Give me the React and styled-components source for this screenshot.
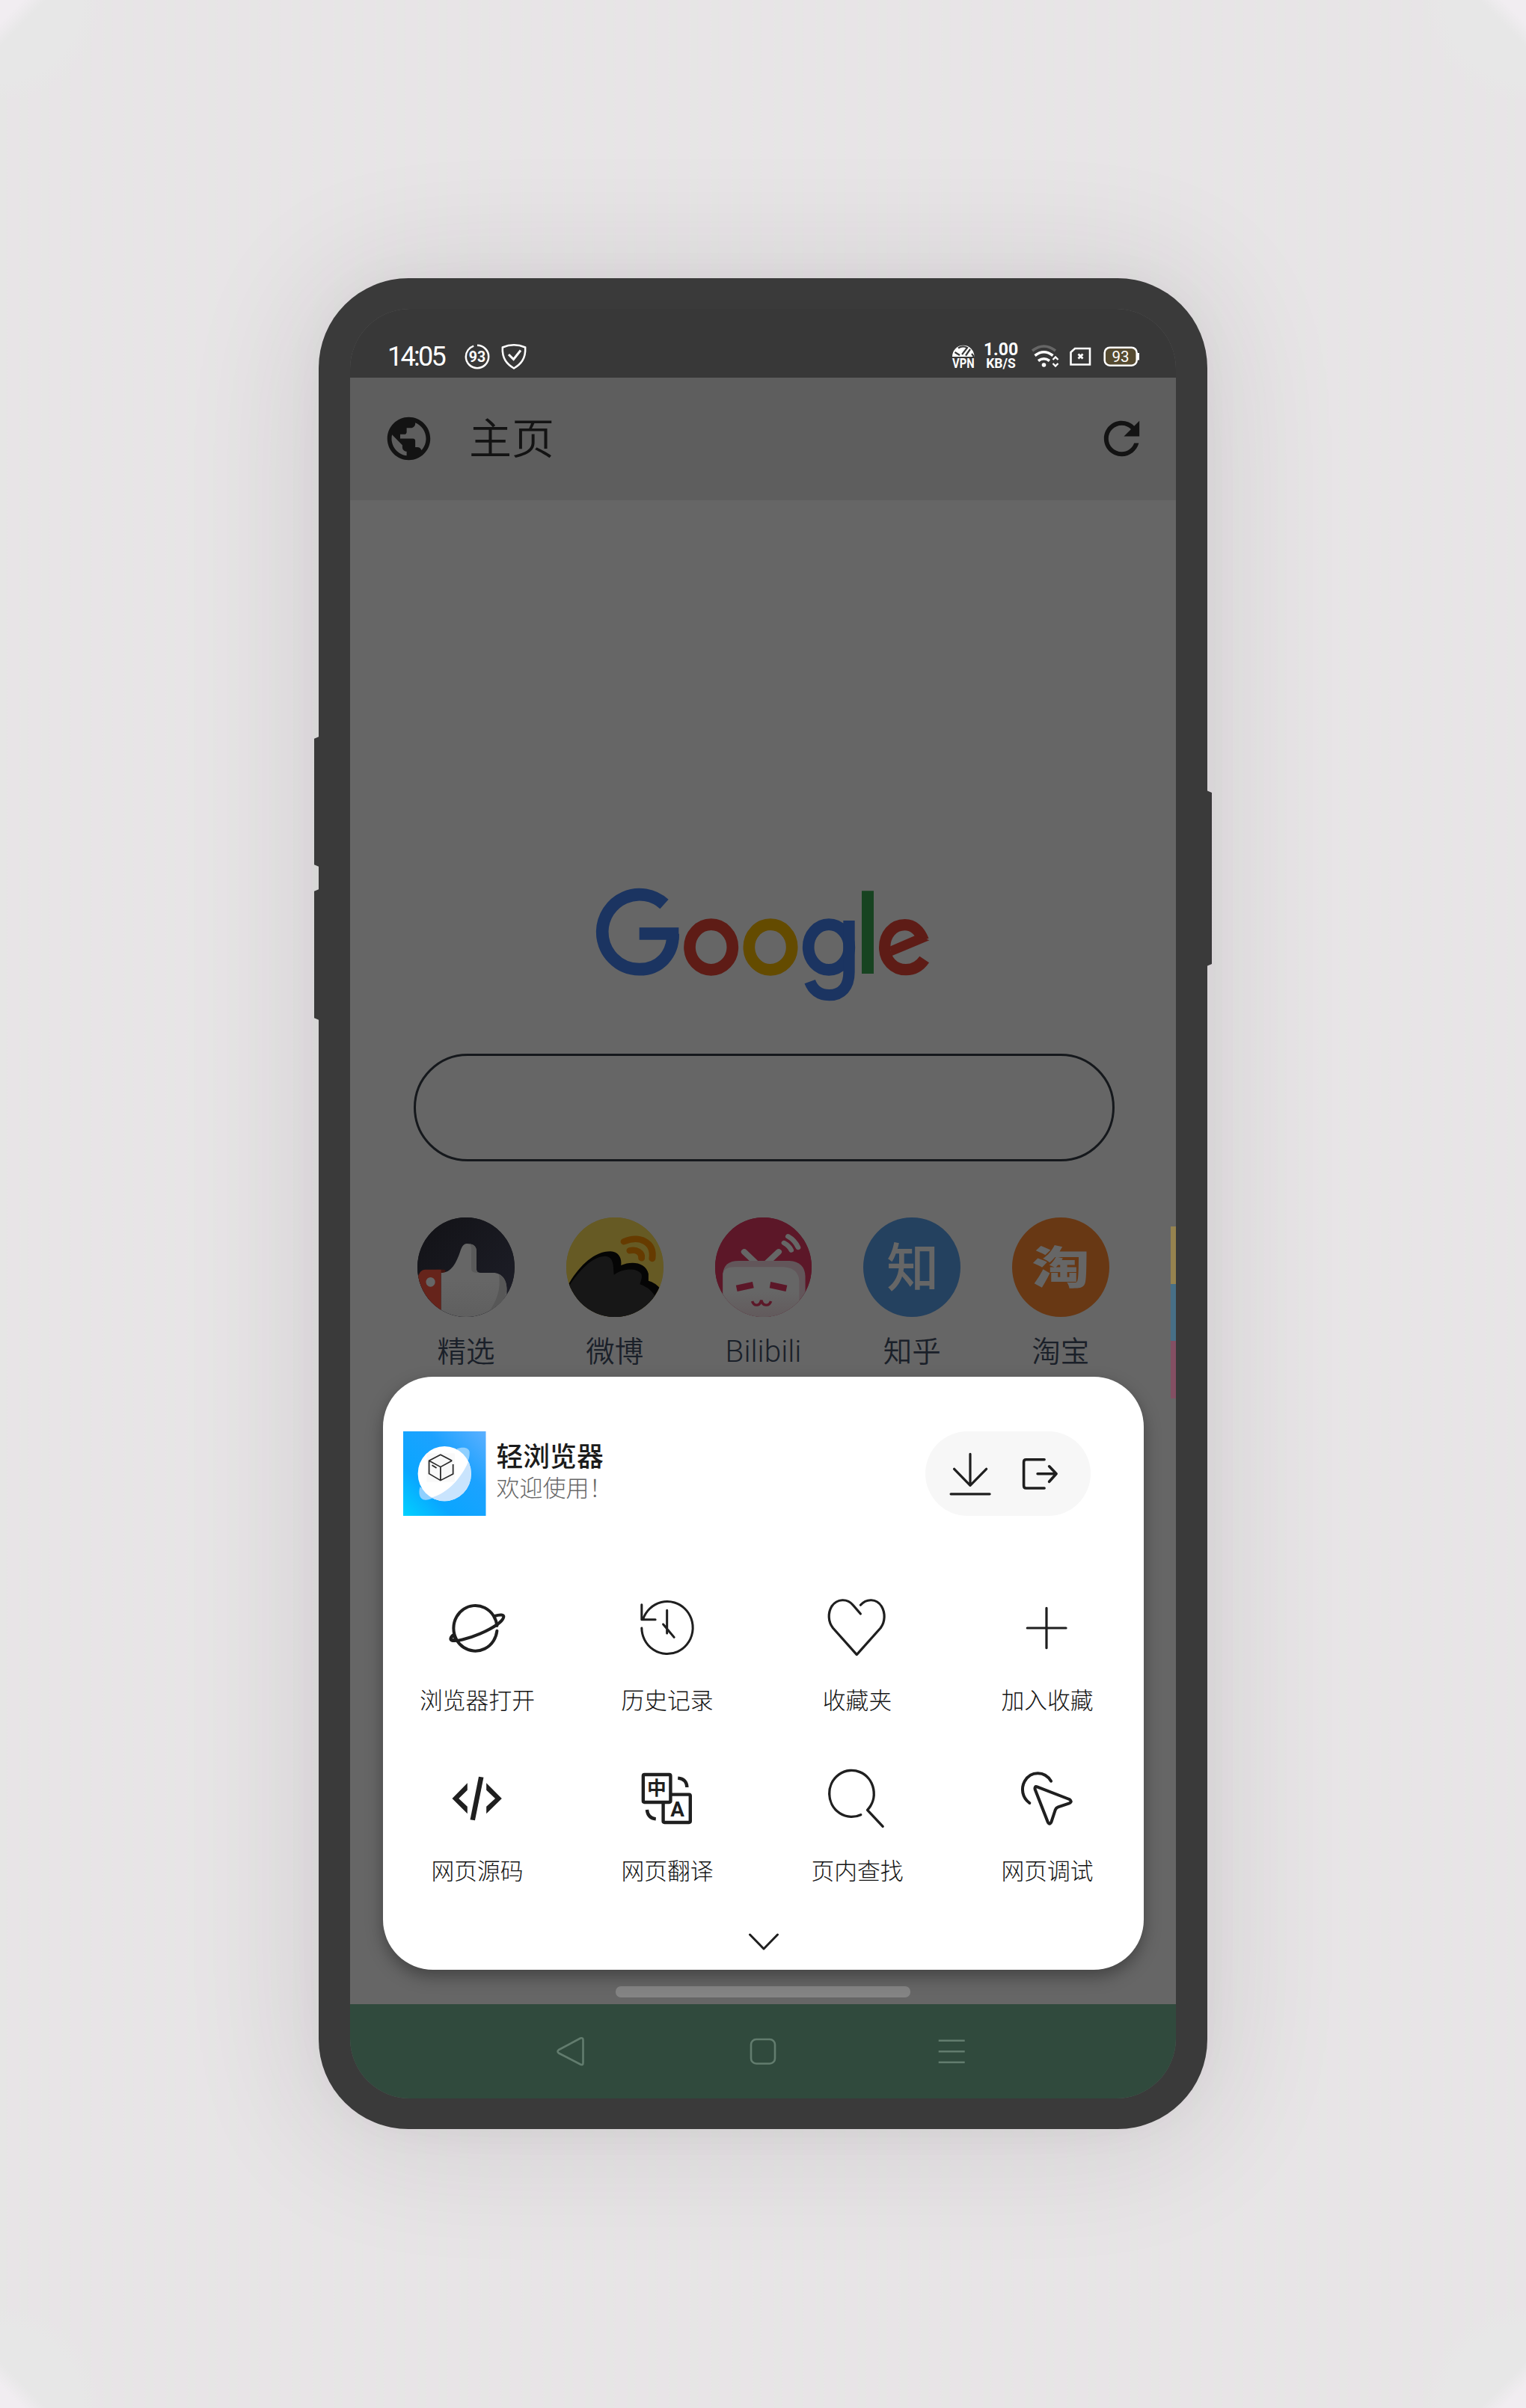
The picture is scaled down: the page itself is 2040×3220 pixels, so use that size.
import React from "react";
import styled, { createGlobalStyle } from "styled-components";
import { MdPublic, MdRefresh } from "react-icons/md";

const GlobalStyle = createGlobalStyle`
  html, body { margin: 0; padding: 0; }
  body { background: #e7e4e6; }
  * { box-sizing: border-box; }
`;

const cjk = `"Noto Sans CJK SC", "Noto Sans", sans-serif`;
const latin = `Roboto, "Noto Sans CJK SC", sans-serif`;
const ink = "#1f1f1f";

const Stage = styled.main`
  width: 2040px;
  height: 3220px;
  overflow: hidden;
  padding: 372px 0 0 426px;
  background:
    linear-gradient(135deg, #f1edf1 0 22px, transparent 44px),
    linear-gradient(225deg, #f1edf1 0 22px, transparent 44px),
    linear-gradient(45deg, #f1edf1 0 22px, transparent 44px),
    linear-gradient(315deg, #f1edf1 0 22px, transparent 44px),
    radial-gradient(circle at 0 0, #e7e7e7 0 110px, transparent 135px),
    radial-gradient(circle at 100% 0, #e7e7e7 0 110px, transparent 135px),
    radial-gradient(circle at 0 100%, #e7e7e7 0 110px, transparent 135px),
    radial-gradient(circle at 100% 100%, #e7e7e7 0 110px, transparent 135px),
    repeating-linear-gradient(90deg, #e6e6e5 0 8px, #e8e4e7 11px 25px, #e6e6e5 28px);
  font-family: ${cjk};
`;

const Phone = styled.section`
  position: relative;
  width: 1187.5px;
  height: 2475px;
  padding: 41px 41.5px 41px 42px;
  border-radius: 120px;
  background: #3a3a3a;
  box-shadow: 0 8px 180px 8px rgba(40, 30, 40, 0.12), 0 0 60px rgba(40, 30, 40, 0.03);
`;

const SideKey = styled.i`
  position: absolute;
  top: ${(p) => p.$top}px;
  ${(p) => p.$side}: -6.5px;
  width: 7px;
  height: ${(p) => p.$height}px;
  background: #3a3a3a;
  clip-path: ${(p) =>
    p.$side === "left"
      ? "polygon(0 3px, 100% 0, 100% 100%, 0 calc(100% - 3px))"
      : "polygon(0 0, 100% 3px, 100% calc(100% - 3px), 0 100%)"};
`;

const Screen = styled.div`
  position: relative;
  display: flex;
  flex-direction: column;
  width: 1104px;
  height: 2393px;
  overflow: hidden;
  border-radius: 80px;
  background: #666666;
`;

const StatusBar = styled.header`
  display: flex;
  align-items: center;
  height: 92px;
  padding: 36px 49px 0 50px;
  background: #383838;
  color: #ffffff;
  font-family: ${latin};
`;

const Clock = styled.time`
  width: 97px;
  font-size: 36px;
  letter-spacing: -2.7px;
  line-height: 40px;
`;

const StatusGlyph = styled.svg`
  display: block;
  flex: none;
  overflow: visible;
  margin-left: ${(p) => p.$gap || 0}px;
`;

const StatusRight = styled.div`
  display: flex;
  align-items: center;
  margin-left: auto;
`;

const Speed = styled.div`
  display: flex;
  flex-direction: column;
  align-items: center;
  width: 46px;
  margin-left: 12px;
  font-weight: 700;
`;

const SpeedLine = styled.span`
  font-size: ${(p) => p.$size}px;
  line-height: ${(p) => p.$line}px;
  white-space: nowrap;
`;

const Toolbar = styled.div`
  display: flex;
  align-items: center;
  height: 164px;
  padding: 0 37px 2px 44px;
  background: #5e5e5e;
  color: #131313;
`;

const PageTitle = styled.h1`
  margin: -9px auto 0 46px;
  font-size: 57px;
  font-weight: 350;
  line-height: 80px;
`;

const Home = styled.div`
  display: flex;
  flex: 1;
  flex-direction: column;
  align-items: center;
  padding: 481px 0 9.5px;
`;

const Logo = styled.svg`
  display: block;
  width: 520px;
  height: 220px;
`;

const SearchBox = styled.div`
  width: 937px;
  height: 144px;
  margin: 39px 0 0 2px;
  border: 3px solid #15181c;
  border-radius: 72px;
`;

const Shortcuts = styled.div`
  display: grid;
  grid-template-columns: repeat(5, 198.7px);
  margin: 75px 0 0 1px;
`;

const Shortcut = styled.div`
  display: flex;
  flex-direction: column;
  align-items: center;
`;

const Badge = styled.div`
  display: flex;
  align-items: center;
  justify-content: center;
  width: 129.5px;
  height: 133px;
  overflow: hidden;
  border-radius: 50%;
  background: ${(p) => p.$bg};
  color: #666666;
`;

const BadgeArt = styled.svg`
  display: block;
  width: 100%;
  height: 100%;
`;

const BadgeChar = styled.span`
  font-size: ${(p) => p.$size}px;
  font-weight: ${(p) => p.$weight};
  line-height: 1;
  transform: ${(p) => p.$transform};
`;

const ShortcutLabel = styled.span`
  margin-top: ${(p) => (p.$latin ? 21 : 18)}px;
  font-family: ${(p) => (p.$latin ? latin : cjk)};
  font-size: ${(p) => (p.$latin ? 40.5 : 38.5)}px;
  font-weight: ${(p) => (p.$latin ? 300 : 350)};
  line-height: 50px;
  color: #1a2029;
`;

const Handle = styled.div`
  width: 394px;
  height: 14.5px;
  margin-top: auto;
  border-radius: 7px;
  background: #848484;
`;

const EdgeTabs = styled.div`
  position: absolute;
  top: 1227px;
  right: 0;
  display: grid;
  grid-template-rows: repeat(3, 76.5px);
  width: 7.5px;
`;

const EdgeTab = styled.i`
  background: ${(p) => p.$color};
`;

const NavBar = styled.nav`
  display: flex;
  align-items: center;
  gap: 207.7px;
  height: 126px;
  padding-left: 273px;
  background: #304a3d;
`;

const NavGlyph = styled.svg`
  display: block;
  width: 44px;
  height: 44px;
  margin-right: ${(p) => p.$after || 0}px;
  fill: none;
  stroke: #627c6e;
  stroke-width: 2.6;
`;

const Sheet = styled.section`
  position: absolute;
  top: 1427.5px;
  left: 44px;
  display: flex;
  flex-direction: column;
  align-items: center;
  width: 1017px;
  height: 793.5px;
  padding-top: 73.5px;
  border-radius: 67px;
  background: #ffffff;
  box-shadow: 0 9px 22px rgba(0, 0, 0, 0.34);
`;

const SheetHead = styled.div`
  display: flex;
  width: 100%;
  height: 113px;
  padding: 0 71.5px 0 27px;
`;

const AppIcon = styled.svg`
  display: block;
  width: 110.5px;
  height: 113.3px;
`;

const AppText = styled.div`
  margin: 9px auto 0 14px;
`;

const AppName = styled.h2`
  margin: 0;
  font-size: 35.8px;
  font-weight: 500;
  line-height: 45px;
  color: #1c1c1c;
`;

const Greeting = styled.p`
  margin: 0;
  font-size: 31px;
  font-weight: 300;
  line-height: 40px;
  color: #686868;
`;

const Pill = styled.div`
  display: flex;
  align-items: center;
  gap: 34px;
  width: 221px;
  height: 113.3px;
  padding-left: 30px;
  border-radius: 57px;
  background: #f7f7f7;
`;

const LineIcon = styled.svg`
  display: block;
  flex: none;
  width: ${(p) => p.$w}px;
  height: ${(p) => p.$h}px;
  fill: none;
  stroke: ${ink};
  stroke-width: ${(p) => p.$stroke};
  stroke-linecap: round;
  stroke-linejoin: round;
`;

const Actions = styled.div`
  display: grid;
  grid-template-columns: repeat(4, 254px);
  row-gap: 64.5px;
  margin: 105px 3px 0 0;
`;

const Action = styled.div`
  display: flex;
  flex-direction: column;
  align-items: center;
`;

const ActionLabel = styled.span`
  margin-top: 27px;
  margin-bottom: 1px;
  font-size: 30.8px;
  font-weight: 300;
  line-height: 45px;
  white-space: nowrap;
  color: #141414;
`;

const Collapse = styled.div`
  margin-top: 58px;
`;

const Mark = styled.text`
  fill: ${ink};
  stroke: none;
  font-family: ${(p) => p.$family};
  font-weight: 700;
  text-anchor: middle;
`;

function GoogleLogo() {
  return (
    <Logo viewBox="0 0 1560 660" fill="none" role="img" aria-label="Google">
      <g stroke="#1b3461">
        <path strokeWidth="50" d="M384 177 A149 151.500 0 0 0 135.500 287 C135.500 370 200 438.500 284 438.500 C365 438.500 419 380 419 296" />
        <path strokeWidth="49" d="M284 295.500 H442" />
      </g>
      <ellipse cx="572" cy="349.500" rx="86" ry="91" stroke="#5e1c16" strokeWidth="47" />
      <ellipse cx="810" cy="349.500" rx="86" ry="91" stroke="#644b00" strokeWidth="47" />
      <g stroke="#1b3461">
        <ellipse cx="1044" cy="349.500" rx="82" ry="91" strokeWidth="47" />
        <path strokeWidth="46" d="M1125 243 V450 C1125 508 1095 542 1045 542 C1005 542 980 520 968 488" />
      </g>
      <path stroke="#174321" strokeWidth="48" d="M1200 124 V456" />
      <path stroke="#5e1c16" strokeWidth="46" d="M1423 322 C1408 282 1382 260 1349 260 C1300 260 1268 300 1268 350 C1268 402 1305 440 1353 440 C1385 440 1410 424 1427 399" />
      <polygon fill="#5e1c16" points="1288,347 1392,302 1447,322 1296,385" />
    </Logo>
  );
}

function ThumbArt() {
  return (
    <BadgeArt viewBox="80 84 361 399" preserveAspectRatio="none">
      <defs>
        <linearGradient id="night" x1="0" y1="0" x2="1" y2="1">
          <stop offset="0" stopColor="#121216" />
          <stop offset="1" stopColor="#1e1f29" />
        </linearGradient>
        <linearGradient id="thumb" x1="0" y1="0" x2="0" y2="1">
          <stop offset="0.5" stopColor="#666666" />
          <stop offset="1" stopColor="#5f5f5f" />
        </linearGradient>
      </defs>
      <rect x="80" y="84" width="361" height="399" fill="url(#night)" />
      <path fill="#401611" d="M150 293 H180 Q190 296 180 308 H150z" />
      <path fill="url(#thumb)" d="M168 306 C205 306 225 270 242 212 Q250 189 264 189 C288 189 300 200 300 218 V290 Q300 306 316 306 H362 C395 306 413 335 413 370 V483 H168z" />
      <path fill="#5a5a5a" d="M275 190 C292 192 300 204 300 218 V290 Q300 306 312 306 Q280 308 281 290 V225 Q283 200 275 190z" />
      <path fill="#575757" d="M384 312 C405 322 413 345 413 375 L400 430 L345 465 C375 420 392 375 384 312z" />
      <path fill="#66241b" d="M168 293 V483 H80 V330 Q88 293 108 293z" />
      <ellipse cx="129" cy="343" rx="17" ry="19" fill="#666" />
    </BadgeArt>
  );
}

function WeiboArt() {
  return (
    <BadgeArt viewBox="637 84 363 399" preserveAspectRatio="none" fill="none">
      <rect x="637" y="84" width="363" height="399" fill="#665a24" />
      <path fill="#050505" d="M630 380 C670 300 730 220 803 220 C835 222 846 250 842 276 C880 258 935 262 945 310 V338 Q970 345 990 370 V483 H630z" />
      <path fill="#171717" d="M640 370 C690 290 735 240 785 239 C818 244 812 285 816 314 C850 288 900 285 918 310 C924 325 915 340 913 352 Q945 362 968 396 V483 H637z" />
      <path stroke="#663b00" strokeWidth="25" strokeLinecap="round" d="M853 181 C910 155 968 180 959 249" />
      <path stroke="#663b00" strokeWidth="25" strokeLinecap="round" d="M875 217 C900 210 922 225 919 247" />
    </BadgeArt>
  );
}

function BilibiliArt() {
  return (
    <BadgeArt viewBox="1192 84 363 399" preserveAspectRatio="none" fill="none">
      <defs>
        <linearGradient id="face" x1="0" y1="0" x2="0" y2="1">
          <stop offset="0.5" stopColor="#666666" />
          <stop offset="1" stopColor="#625a5c" />
        </linearGradient>
      </defs>
      <rect x="1192" y="84" width="363" height="399" fill="#5c1728" />
      <g stroke="#666" strokeLinecap="round">
        <path strokeWidth="23" d="M1301 222 L1350 272 M1430 222 L1380 272" />
        <path strokeWidth="19" d="M1465 160 Q1490 175 1503 204 M1450 186 Q1470 198 1477 215" />
      </g>
      <path fill="#62565a" d="M1221 483 V310 Q1225 258 1280 258 H1470 Q1528 262 1530 320 V483z" />
      <path fill="url(#face)" d="M1221 483 V310 Q1225 283 1265 283 H1450 Q1505 288 1507 340 V420 L1500 483z" />
      <path fill="#5c1728" d="M1270 356 L1332 342 L1337 367 L1275 381z M1400 342 L1462 356 L1457 381 L1396 367z" />
      <path stroke="#5c1728" strokeWidth="10" d="M1331 420 C1338 442 1360 440 1365 416 C1370 440 1394 442 1401 420" />
    </BadgeArt>
  );
}

const shortcuts = [
  { label: "精选", bg: "#16161b", art: <ThumbArt /> },
  { label: "微博", bg: "#665a24", art: <WeiboArt /> },
  { label: "Bilibili", latin: true, bg: "#5c1728", art: <BilibiliArt /> },
  { label: "知乎", bg: "#24415f", art: <BadgeChar $size={70} $weight={500} $transform="translate(1px, -4px)">知</BadgeChar> },
  { label: "淘宝", bg: "#683814", art: <BadgeChar $size={77} $weight={900} $transform="translateY(-4px) scaleY(0.78)">淘</BadgeChar> },
];

const actions = [
  {
    label: "浏览器打开", cx: 409, cy: 231, stroke: 12,
    art: (
      <>
        <path d="M487 222 A86 91 0 1 0 487 242" />
        <path d="M478 183 C498 176 517 176 513 188 C508 206 470 232 420 254 C370 276 322 286 308 281 C300 276 305 266 312 260" />
        <ellipse cx="314" cy="272" rx="8" ry="8" />
      </>
    ),
  },
  {
    label: "历史记录", cx: 1160, cy: 231, stroke: 9,
    art: <path d="M1065 194 A101 105 0 1 1 1059 231 M1059 137 V197 H1113 M1159 160 V252 M1144 216 L1187 268" />,
  },
  {
    label: "收藏夹", cx: 374, cy: 231, stroke: 9.5,
    art: <path d="M387 174 L357 139 C335 112 295 112 273 144 C258 170 258 205 278 231 L372 338 L466 231 C485 205 485 170 470 144 C450 112 410 112 387 139" />,
  },
  {
    label: "加入收藏", cx: 1125, cy: 231, stroke: 9.5,
    art: <path d="M1122 151 V311 M1046 231 H1199" />,
  },
  {
    label: "网页源码", cx: 409, cy: 912, stroke: 0,
    art: (
      <g fill={ink} stroke="none">
        <polygon points="370,850 310,912 370,973 370,944 336,912 370,878" />
        <polygon points="415,824 434,827 400,1000 381,997" />
        <polygon points="445,850 506,912 445,973 445,944 480,912 445,878" />
      </g>
    ),
  },
  {
    label: "网页翻译", cx: 1160, cy: 912, stroke: 13,
    art: (
      <>
        <rect x="1144" y="896" width="107" height="112" rx="5" />
        <rect x="1065" y="816" width="108" height="111" rx="5" fill="#fff" />
        <path strokeLinecap="butt" d="M1202 830 C1225 832 1237 845 1238 867 M1080 957 C1082 980 1095 992 1115 994" />
        <Mark $family={cjk} x="1118" y="898" fontSize="76">中</Mark>
        <Mark $family={latin} x="1200" y="985" fontSize="82">A</Mark>
      </>
    ),
  },
  {
    label: "页内查找", cx: 374, cy: 912, stroke: 10,
    art: <path d="M388 977 A88 93 0 1 1 414 958 L475 1024" />,
  },
  {
    label: "网页调试", cx: 1125, cy: 912, stroke: 12,
    art: (
      <>
        <path d="M1140 842 C1115 800 1060 800 1036 842 C1020 872 1026 908 1055 930" />
        <path d="M1085 865 L1212 915 Q1226 924 1212 931 L1168 946 Q1160 949 1157 957 L1141 1006 Q1134 1020 1127 1006 L1077 876 Q1074 861 1085 865Z" />
      </>
    ),
  },
];

function AppLogo() {
  return (
    <AppIcon viewBox="109 252 310 340" preserveAspectRatio="none" fill="none">
      <defs>
        <linearGradient id="sky" x1="0" y1="1" x2="1" y2="0">
          <stop offset="0" stopColor="#00d2ff" />
          <stop offset="0.3" stopColor="#0aa6ff" />
          <stop offset="0.65" stopColor="#1ca2ff" />
          <stop offset="1" stopColor="#5cb0ff" />
        </linearGradient>
        <clipPath id="globe"><ellipse cx="264" cy="422" rx="100" ry="110" /></clipPath>
      </defs>
      <rect x="109" y="252" width="310" height="340" fill="url(#sky)" />
      <path fill="#8fd0ff" d="M310 322 C335 312 360 318 358 340 C358 360 350 380 340 395z M172 475 C165 500 170 530 195 527 Q215 524 225 515z" />
      <ellipse cx="264" cy="422" rx="100" ry="110" fill="#fff" />
      <path clipPath="url(#globe)" fill="#c9e4fd" d="M358 360 C335 430 280 500 210 520 L260 545 H380 V360z" />
      <rect x="197" y="340" width="106" height="115" fill="#f9f9f9" />
      <path stroke="#2a2a2a" strokeWidth="5" strokeLinejoin="round" d="M292 370 L249 346 L206 370 L249 395 L292 370 M206 370 V422 L249 449 L296 423 V384 M249 395 V449 M217 388 L234 399" />
    </AppIcon>
  );
}

export default function App() {
  return (
    <>
      <GlobalStyle />
      <Stage>
        <Phone>
          <SideKey $side="left" $top={613} $height={174} />
          <SideKey $side="left" $top={817} $height={175} />
          <SideKey $side="right" $top={685} $height={235} />
          <Screen>
            <StatusBar>
              <Clock>14:05</Clock>
              <StatusGlyph $gap={5} width="36" height="36" viewBox="619.500 459 36 36" fill="none" stroke="#fff">
                <circle cx="637.500" cy="477" r="15.200" strokeWidth="2.500" strokeDasharray="90 6" transform="rotate(-90 637.500 477)" />
                <text x="637.500" y="484" fontSize="19.500" fontWeight="700" fontFamily="Roboto, sans-serif" textAnchor="middle" fill="#fff" stroke="none">93</text>
              </StatusGlyph>
              <StatusGlyph $gap={13} width="36" height="36" viewBox="669 459 36 36" fill="none" stroke="#fff" strokeWidth="2.500">
                <path d="M671.800 464.500 Q687 458 702.200 464.500 C703 480 696 487 687 492.500 C678 487 671 480 671.800 464.500z" />
                <path strokeWidth="3" d="M680 474 L686.500 480.500 L696 468.500" />
              </StatusGlyph>
              <StatusRight>
                <StatusGlyph width="30" height="34" viewBox="1273 460 30 34" fill="none" stroke="#fff">
                  <path fill="#fff" stroke="none" d="M1273 477 A14.500 15 0 0 1 1302.500 477z" />
                  <path stroke="#383838" strokeWidth="2.200" d="M1276.500 471 L1283 475 M1281 465.500 Q1287 461.500 1293 465 L1286 474 M1297 467 L1291 475.500 M1299 473 L1302 477" />
                  <text x="1287.800" y="491.800" fontSize="17.500" textLength="29.500" lengthAdjust="spacingAndGlyphs" fontWeight="700" fontFamily="Roboto, sans-serif" textAnchor="middle" fill="#fff" stroke="none">VPN</text>
                </StatusGlyph>
                <Speed>
                  <SpeedLine $size={23} $line={18}>1.00</SpeedLine>
                  <SpeedLine $size={17.5} $line={19}>KB/S</SpeedLine>
                </Speed>
                <StatusGlyph $gap={18} width="36" height="32" viewBox="1379 461 36 32" fill="none" stroke="#fff" strokeWidth="3.600">
                  <path stroke="#666" d="M1380 469 Q1395.500 457 1411 469" />
                  <path d="M1383.500 475.500 Q1395.500 466 1407.500 475.500 M1388 482.500 Q1395.500 477 1403 482.500" />
                  <circle cx="1395.500" cy="488" r="2.800" fill="#fff" stroke="none" />
                  <path strokeWidth="2.400" d="M1407.500 481 L1411 477.500 L1414.500 481 M1407.500 486 L1411 489.500 L1414.500 486" />
                </StatusGlyph>
                <StatusGlyph $gap={15} width="29" height="26" viewBox="1430 464 29 26" fill="none" stroke="#fff" strokeWidth="2.600">
                  <path d="M1437 466 H1457 V487.500 H1431.500 V471z" />
                  <path strokeWidth="2.800" d="M1441.500 473.500 L1447.500 479.500 M1447.500 473.500 L1441.500 479.500" />
                </StatusGlyph>
                <StatusGlyph $gap={16} width="48" height="28" viewBox="1475 463 48 28" fill="none" stroke="#fff">
                  <rect x="1476.700" y="464.700" width="43" height="24" rx="7" strokeWidth="2.500" fill="#554a30" />
                  <path strokeWidth="3" d="M1521.500 472 V481.500" />
                  <text x="1498" y="484" fontSize="20.500" fontFamily="Roboto, sans-serif" textAnchor="middle" fill="#fff" stroke="none">93</text>
                </StatusGlyph>
              </StatusRight>
            </StatusBar>
            <Toolbar>
              <MdPublic size={69} />
              <PageTitle>主页</PageTitle>
              <MdRefresh size={71} />
            </Toolbar>
            <Home>
              <GoogleLogo />
              <SearchBox />
              <Shortcuts>
                {shortcuts.map((s) => (
                  <Shortcut key={s.label}>
                    <Badge $bg={s.bg}>{s.art}</Badge>
                    <ShortcutLabel $latin={s.latin}>{s.label}</ShortcutLabel>
                  </Shortcut>
                ))}
              </Shortcuts>
              <Handle />
            </Home>
            <NavBar>
              <NavGlyph $after={5.6} viewBox="741 2722 44 44">
                <path strokeLinejoin="round" d="M747 2742 L776 2726.500 Q779.500 2725.500 779.500 2729 V2759.500 Q779.500 2763 776 2761.500 L747 2746.500 Q744 2744.200 747 2742z" />
              </NavGlyph>
              <NavGlyph viewBox="998.300 2722 44 44">
                <rect x="1004.300" y="2728" width="32" height="32.500" rx="7" />
              </NavGlyph>
              <NavGlyph viewBox="1244.300 2722 44 44">
                <path d="M1249 2729.700 H1284 M1249 2744.200 H1284 M1249 2758.700 H1284" />
              </NavGlyph>
            </NavBar>
            <EdgeTabs>
              <EdgeTab $color="#96834f" />
              <EdgeTab $color="#476f86" />
              <EdgeTab $color="#844f63" />
            </EdgeTabs>
            <Sheet>
              <SheetHead>
                <AppLogo />
                <AppText>
                  <AppName>轻浏览器</AppName>
                  <Greeting>欢迎使用！</Greeting>
                </AppText>
                <Pill>
                  <LineIcon $w={60} $h={64} $stroke={3.2} viewBox="1266.400 1938.700 60 64">
                    <path d="M1296.400 1944 V1986 M1275 1964 L1296.400 1986 L1318 1964 M1270.500 1997.500 H1322.500" />
                  </LineIcon>
                  <LineIcon $w={60} $h={64} $stroke={3.6} viewBox="1360.400 1938.700 60 64">
                    <path d="M1395.500 1951.500 H1371 Q1368 1951.500 1368 1955 V1986 Q1368 1989.700 1371 1989.700 H1395.500 M1386.500 1970.500 H1411.500 M1402 1960.500 L1411.500 1970.500 L1402 1981" />
                  </LineIcon>
                </Pill>
              </SheetHead>
              <Actions>
                {actions.map((a) => (
                  <Action key={a.label}>
                    <LineIcon
                      $w={90}
                      $h={90}
                      $stroke={a.stroke}
                      viewBox={`${a.cx - 133} ${a.cy - 135} 266 270`}
                      preserveAspectRatio="none"
                    >
                      {a.art}
                    </LineIcon>
                    <ActionLabel>{a.label}</ActionLabel>
                  </Action>
                ))}
              </Actions>
              <Collapse>
                <LineIcon $w={48} $h={32} $stroke={3} viewBox="0 0 48 32">
                  <path d="M5.500 6 L24 25 L42.500 6" />
                </LineIcon>
              </Collapse>
            </Sheet>
          </Screen>
        </Phone>
      </Stage>
    </>
  );
}
